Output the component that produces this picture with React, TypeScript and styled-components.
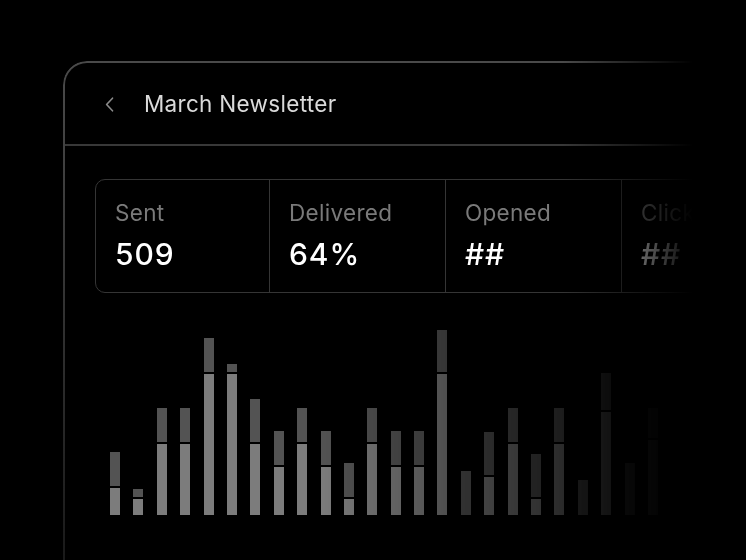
import styled, { createGlobalStyle } from 'styled-components';

const GlobalStyle = createGlobalStyle`
  html, body {
    margin: 0;
    padding: 0;
    background: #000000;
    overflow: hidden;
  }
  body {
    font-family: Inter, "Noto Sans", sans-serif;
    -webkit-font-smoothing: antialiased;
  }
`;

type Bar = { total: number; lower: number };

// heights in px, measured from the chart baseline
const bars: Bar[] = [
  { total: 63, lower: 27 },
  { total: 26, lower: 16 },
  { total: 107, lower: 71 },
  { total: 107, lower: 71 },
  { total: 177, lower: 141 },
  { total: 151, lower: 141 },
  { total: 116, lower: 71 },
  { total: 84, lower: 48 },
  { total: 107, lower: 71 },
  { total: 84, lower: 48 },
  { total: 52, lower: 16 },
  { total: 107, lower: 71 },
  { total: 84, lower: 48 },
  { total: 84, lower: 48 },
  { total: 185, lower: 141 },
  { total: 44, lower: 0 },
  { total: 83, lower: 38 },
  { total: 107, lower: 71 },
  { total: 61, lower: 16 },
  { total: 107, lower: 71 },
  { total: 35, lower: 0 },
  { total: 142, lower: 103 },
  { total: 52, lower: 0 },
  { total: 107, lower: 75 },
];

const stats = [
  { label: 'Sent', value: '509' },
  { label: 'Delivered', value: '64%' },
  { label: 'Opened', value: '##' },
  { label: 'Clicked', value: '##' },
];

export default function App() {
  return (
    <>
      <GlobalStyle />
      <S.Page>
        <S.Card>
          <S.Header>
            <S.BackButton aria-label='back'>
              <svg width='9' height='15' viewBox='0 0 9 15' fill='none'>
                <path d='M7.5 1.2L1.6 7.5L7.5 13.8' stroke='#8a8a8a' strokeWidth='1.6' strokeLinecap='round' strokeLinejoin='round' />
              </svg>
            </S.BackButton>
            <S.Title>March Newsletter</S.Title>
          </S.Header>

          <S.Body>
            <S.StatsBox>
              {stats.map((item) => (
                <S.StatCell key={item.label}>
                  <S.StatLabel>{item.label}</S.StatLabel>
                  <S.StatValue>{item.value}</S.StatValue>
                </S.StatCell>
              ))}
            </S.StatsBox>

            <S.Chart>
              {bars.map((bar, i) => (
                <S.BarColumn key={i}>
                  {bar.total - bar.lower > 0 && <S.Segment $tone='upper' style={{ height: bar.total - bar.lower - (bar.lower > 0 ? 2 : 0) }} />}
                  {bar.lower > 0 && <S.Segment $tone='lower' style={{ height: bar.lower }} />}
                </S.BarColumn>
              ))}
            </S.Chart>
          </S.Body>
        </S.Card>
      </S.Page>
    </>
  );
}

const S = {
  Page: styled.div`
    width: 746px;
    height: 560px;
    padding: 61px 0 0 63px;
    box-sizing: border-box;
    overflow: hidden;
  `,

  Card: styled.div`
    width: 760px;
    height: 540px;
    box-sizing: border-box;
    border: 2px solid transparent;
    border-radius: 24px;
    background:
      linear-gradient(#000000, #000000) padding-box,
      linear-gradient(to bottom, #4a4a4a 0%, #3a3a3a 30%, #161616 100%) border-box;
    -webkit-mask-image: linear-gradient(to right, #000 500px, transparent 630px);
    mask-image: linear-gradient(to right, #000 500px, transparent 630px);
  `,

  Header: styled.header`
    height: 81px;
    display: flex;
    align-items: center;
    gap: 30px;
    padding-left: 40px;
    border-bottom: 2px solid #383838;
  `,

  BackButton: styled.button`
    display: flex;
    align-items: center;
    justify-content: center;
    padding: 0;
    margin-top: 2px;
    border: none;
    background: none;
  `,

  Title: styled.h1`
    margin: 0;
    color: #dadada;
    font-size: 22.5px;
    font-weight: 400;
    letter-spacing: 0.3px;
  `,

  Body: styled.div`
    padding: 33px 0 0 30px;
  `,

  StatsBox: styled.div`
    display: flex;
    width: 720px;
    height: 114px;
    box-sizing: border-box;
    border: 1.5px solid #353535;
    border-radius: 10px;
  `,

  StatCell: styled.div`
    width: 176px;
    flex-shrink: 0;
    box-sizing: border-box;
    padding: 19px 0 0 19px;
    display: flex;
    flex-direction: column;
    gap: 10px;

    &:first-child {
      width: 173px;
    }

    & + & {
      border-left: 1.5px solid #353535;
    }
  `,

  StatLabel: styled.span`
    color: #7a7a7a;
    font-size: 22.5px;
    line-height: 27px;
    font-weight: 400;
    letter-spacing: 0.3px;
  `,

  StatValue: styled.span`
    color: #ffffff;
    font-size: 30px;
    line-height: 36px;
    font-weight: 500;
    letter-spacing: 0.9px;
  `,

  Chart: styled.div`
    height: 200px;
    margin-top: 22px;
    padding-left: 15px;
    display: flex;
    align-items: flex-end;
    gap: 13.4px;
    -webkit-mask-image: linear-gradient(to right, #000 225px, rgba(0, 0, 0, 0.5) 400px, rgba(0, 0, 0, 0.08) 580px);
    mask-image: linear-gradient(to right, #000 225px, rgba(0, 0, 0, 0.5) 400px, rgba(0, 0, 0, 0.08) 580px);
  `,

  BarColumn: styled.div`
    width: 10px;
    flex-shrink: 0;
    display: flex;
    flex-direction: column;
    gap: 2px;
  `,

  Segment: styled.div<{ $tone: 'upper' | 'lower' }>`
    width: 100%;
    background: ${({ $tone }) => ($tone === 'upper' ? '#535353' : '#7c7c7c')};
  `,
};
